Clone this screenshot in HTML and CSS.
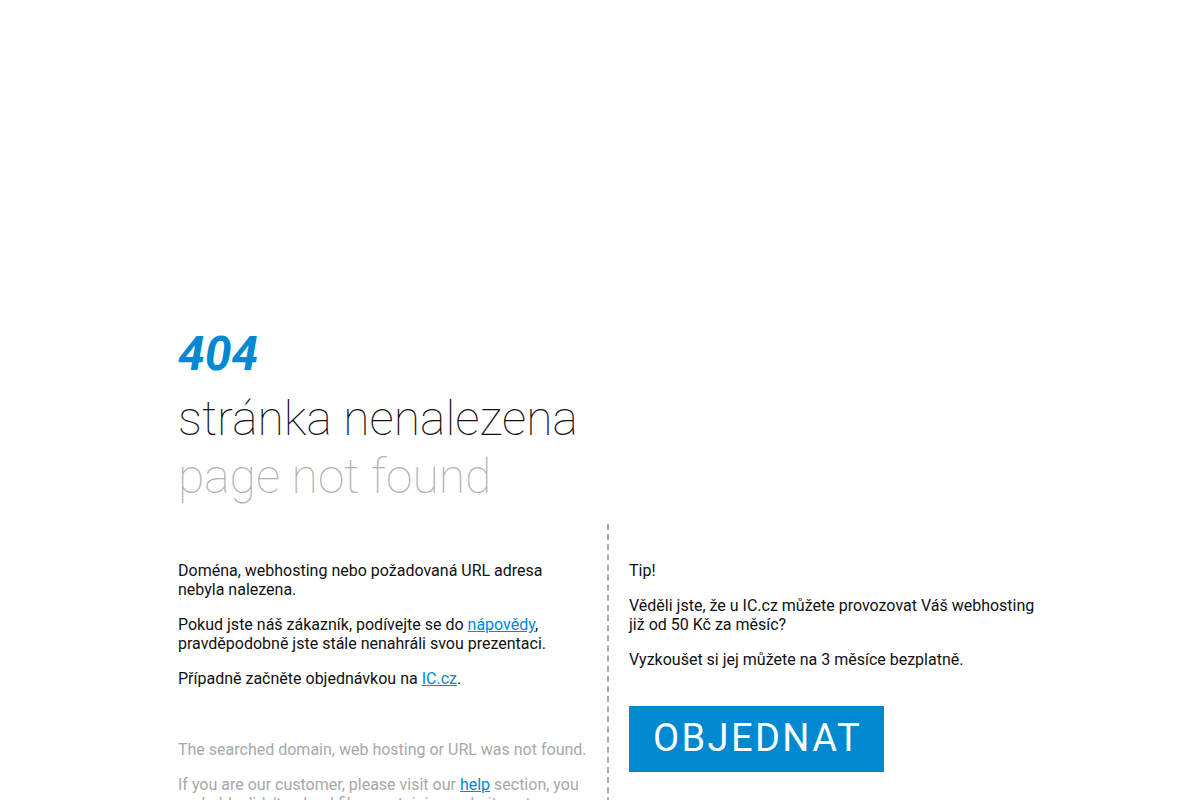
FILE: index.html
```html
<!DOCTYPE html>
<html lang="cs">
<head>
<meta charset="utf-8">
<title>404 - stránka nenalezena</title>
<link rel="stylesheet" href="styles.css">
</head>
<body>
<div class="page">
  <header class="heading">
    <div class="code">404</div>
    <h1 class="title-cz">stránka nenalezena</h1>
    <h2 class="title-en">page not found</h2>
  </header>
  <div class="columns">
    <div class="col col-left">
      <div class="cz">
        <p>Doména, webhosting nebo požadovaná URL adresa nebyla nalezena.</p>
        <p>Pokud jste náš zákazník, podívejte se do <a href="#">nápovědy</a>, pravděpodobně jste stále nenahráli svou prezentaci.</p>
        <p>Případně začněte objednávkou na <a href="#">IC.cz</a>.</p>
      </div>
      <div class="en">
        <p>The searched domain, web hosting or URL was not found.</p>
        <p>If you are our customer, please visit our <a href="#">help</a> section, you probably didn't upload files containing website yet.</p>
        <p>Otherwise you can start by ordering at <a href="#">IC.cz</a>.</p>
      </div>
    </div>
    <div class="col col-right">
      <p>Tip!</p>
      <p>Věděli jste, že u IC.cz můžete provozovat Váš webhosting již od 50 Kč za měsíc?</p>
      <p>Vyzkoušet si jej můžete na 3 měsíce bezplatně.</p>
      <div class="cta"><a class="btn" href="#">OBJEDNAT</a></div>
    </div>
  </div>
</div>
</body>
</html>
```

FILE: styles.css
```css
html, body {
  margin: 0;
  padding: 0;
  background: #fff;
}
body {
  font-family: Roboto, "Liberation Sans", Arial, sans-serif;
  font-size: 16px;
  color: #111;
}
.page {
  width: 862px;
  margin-left: 178px;
  padding-top: 324px;
}
.heading {
  margin: 0;
}
.code {
  font-size: 48px;
  line-height: 60px;
  font-weight: 700;
  font-style: italic;
  color: #0088d1;
  margin-bottom: 6px;
}
.title-cz,
.title-en {
  margin: 0;
  font-size: 48px;
  line-height: 57.6px;
  font-weight: 100;
}
.title-cz {
  color: #111;
}
.title-en {
  color: #b2b2b2;
}
.columns {
  display: grid;
  grid-template-columns: 431px 431px;
  margin-top: 19px;
}
.col {
  padding-top: 21px;
}
.col-left {
  padding-right: 18px;
  border-right: 2px dashed #aaa;
}
.col-right {
  padding-left: 20px;
}
p {
  margin: 16px 0;
}
.en {
  margin-top: 52px;
  color: #a8a8a8;
}
a {
  color: #0088d1;
  text-decoration: underline;
}
.cta {
  margin-top: 37px;
}
.btn {
  display: inline-block;
  background: #0088d1;
  color: #fff;
  text-decoration: none;
  font-size: 38px;
  font-weight: 400;
  letter-spacing: 2.4px;
  padding: 10px 22px 12px 24px;
}
```
